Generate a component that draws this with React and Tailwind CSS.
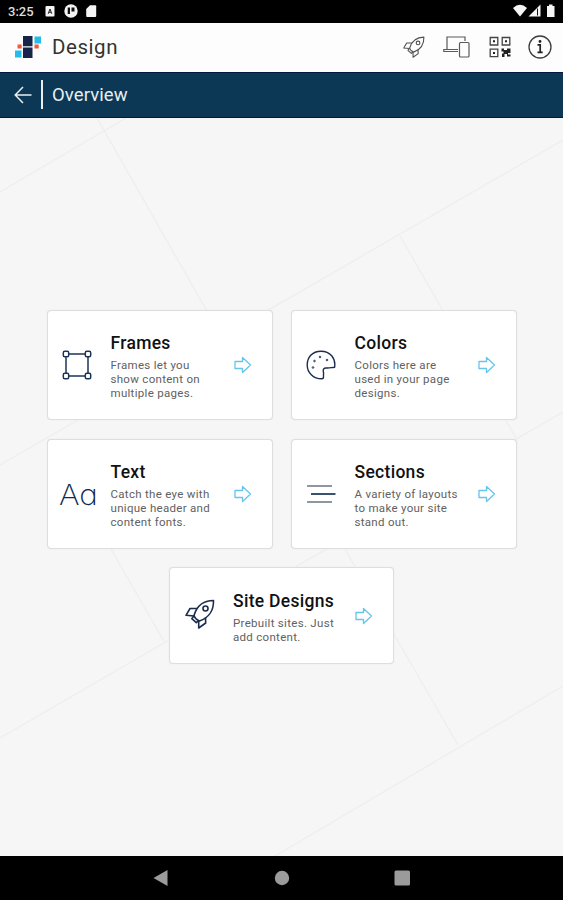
const FramesIcon = () => (
  <svg viewBox="0 0 30 30" className="h-[30px] w-[30px]" fill="none" stroke="#1c3557" strokeWidth="1.5">
    <path d="M7 4h16M7 26h16M4 7v16M26 7v16" />
    <rect x="1.3" y="1.3" width="5.4" height="5.4" rx="1.5" />
    <rect x="23.3" y="1.3" width="5.4" height="5.4" rx="1.5" />
    <rect x="1.3" y="23.3" width="5.4" height="5.4" rx="1.5" />
    <rect x="23.3" y="23.3" width="5.4" height="5.4" rx="1.5" />
  </svg>
);

const PaletteIcon = () => (
  <svg viewBox="0 0 30 30" className="h-[30px] w-[30px]" fill="none" stroke="#1c2d50" strokeWidth="1.4">
    <path d="M28.6 17.2C30 8 24 1.2 15 1.2S1.2 7.5 1.2 15c0 7.5 6 13.8 14.5 13.8q1.8 0 1.8-1.8c-.3-2 .5-3.500-.2-5.500-.4-2.500.8-3.800 3.200-3.500 2.800.3 5-.6 8.100-.8z" />
    <g strokeWidth="1">
      <circle cx="14" cy="7" r=".8" />
      <circle cx="21" cy="10" r=".8" />
      <circle cx="8.5" cy="11" r=".8" />
      <circle cx="7" cy="17.5" r=".8" />
    </g>
  </svg>
);

const SectionsIcon = () => (
  <svg viewBox="0 0 30 30" className="h-[30px] w-[30px]" fill="none" strokeWidth="1.7">
    <path d="M1 7h25M1 23h25" stroke="#6b7584" />
    <path d="M5 15h24.500" stroke="#163556" />
  </svg>
);

const RocketIcon = ({ className, stroke, strokeWidth }) => (
  <svg viewBox="0 0 30 30" className={className} fill="none" stroke={stroke} strokeWidth={strokeWidth} strokeLinejoin="round">
    <path d="M9 16.500C11.500 8 17 1.500 28.500 1.500c.3 10-5 17.500-14 20.500-2.500-1-4.700-3-5.500-5.500z" />
    <circle cx="20.500" cy="9.500" r="2.500" />
    <path d="M12 9.500H5L1 16.300l8 .7M20.500 18.500l.2 5.500-7 5v-7" />
    <path d="M8.800 17l-2 2.700 4.500 4 2-1.800" />
  </svg>
);

const ArrowIcon = () => (
  <svg viewBox="0 0 18 18" className="h-[18px] w-[18px] shrink-0" fill="none" stroke="#66c5ec" strokeWidth="1.3" strokeLinejoin="round">
    <path d="M1 5.500h7.500v-4l8 7.500-8 7.500v-4H1z" />
  </svg>
);

const cards = [
  { title: "Frames", lines: ["Frames let you", "show content on", "multiple pages."], icon: <FramesIcon /> },
  { title: "Colors", lines: ["Colors here are", "used in your page", "designs."], icon: <PaletteIcon /> },
  {
    title: "Text",
    lines: ["Catch the eye with", "unique header and", "content fonts."],
    icon: (
      <span className="ml-[2px] origin-center scale-x-112 pt-[2px] font-['Inter'] text-[28px] leading-[30px] font-extralight text-[#0d2a4f] [font-feature-settings:'cv11']">
        Aa
      </span>
    ),
  },
  { title: "Sections", lines: ["A variety of layouts", "to make your site", "stand out."], icon: <SectionsIcon /> },
];

const Card = ({ title, lines, icon, className }) => (
  <button
    className={`flex items-center rounded-[4px] border border-[#dedede] bg-white pr-5 text-left shadow-[0_0_1px_#dddddd] ${className}`}
  >
    <div className="flex w-[59px] shrink-0 justify-center">{icon}</div>
    <div className="ml-1 flex-1 pt-[2px]">
      <h2 className="text-[17.5px] leading-[22px] font-medium tracking-[0.3px] text-[#111111]">{title}</h2>
      <p className="mt-1 text-[11.5px] leading-[14px] tracking-[0.3px] whitespace-nowrap text-[#616161]">
        {lines.map((line) => (
          <span key={line} className="block">{line}</span>
        ))}
      </p>
    </div>
    <ArrowIcon />
  </button>
);

const StatusBar = () => (
  <div className="flex h-[22.5px] items-center bg-black px-2 text-white">
    <span className="w-[26px] pt-[2px] text-[13px] leading-4 font-medium text-[#dddddd]">3:25</span>
    <svg viewBox="0 0 54 14" className="ml-[10px] h-[14px] w-[54px]" fill="#f5f5f5">
      <rect x="1.500" y="2" width="9" height="10.500" rx="1" />
      <path d="M4.200 9.800L6 5l1.800 4.800M4.800 8.300h2.400" fill="none" stroke="#222222" />
      <circle cx="27" cy="7" r="6.700" />
      <path d="M23.700 3.500h2.300v6.500h-2.300zM27.500 3.500h3v4h-3z" fill="#111111" />
      <path d="M46 1.300h5.200q1 0 1 1v9.700q0 1-1 1h-8q-1 0-1-1V5z" />
    </svg>
    <svg viewBox="0 0 42 14" className="ml-auto h-[14px] w-[42px]" fill="#f5f5f5">
      <path d="M0 4q7-6.500 14 0L7 12.500z" />
      <path d="M15.500 12.500L27.500.5v12z" />
      <path d="M24.500 4.500v7" stroke="#111111" />
      <path d="M34 2h2V.5h3.500V2h2v11H34z" />
    </svg>
  </div>
);

const Header = () => (
  <header className="flex h-[49px] items-center bg-[#fdfdfd] pr-[11.5px] pl-[14px]">
    <svg viewBox="0 0 28 24" className="h-6 w-7">
      <path d="M9 1h9.500v10H9zM9 12.500h9.500v10.500H9z" fill="#17254a" />
      <path d="M20.500 1.500H27v7h-6.500zM1 15.500h6.500v7H1z" fill="#24bdea" />
      <path d="M3.500 9.500h4.200v4H3.500zM20.500 9.500h4.200v4h-4.200z" fill="#f05a3c" />
      <path d="M9 11.500h9.500" stroke="#b9c2cc" />
    </svg>
    <h1 className="ml-[10px] text-[20.5px] leading-6 tracking-[0.55px] text-[#333333]">Design</h1>
    <div className="ml-auto flex items-center">
      <RocketIcon className="h-[22px] w-[22px]" stroke="#505050" strokeWidth="1.5" />
      <svg viewBox="0 0 27 22" className="ml-[18px] h-[22px] w-[27px]" fill="none" stroke="#5a5a5a" strokeWidth="1.2">
        <path d="M4 13.500V1h18v4M4 13.500H.8v2H15M4 13.500h11" />
        <rect x="16.500" y="6.500" width="9.500" height="14.500" rx="1" />
      </svg>
      <svg viewBox="0 0 22 22" className="ml-[19px] h-[22px] w-[22px]" fill="none" stroke="#444444" strokeWidth="1.3">
        <path d="M1.200 1.500h7.600v7.500H1.200zM13.200 1.500h7.600v7.500h-7.600zM1.200 13.200h7.600v7.500H1.200z" />
        <path d="M4 4.200h2v2H4zM16 4.200h2v2h-2zM4 16h2v2H4zM12.500 12.500h2.500v1.500h3v-1.500h3.500V17H19v1.500h2.500v2H18V18h-2.500v3h-2.500v-3.500h1.500V15.500h-2z" fill="#222222" stroke="none" />
      </svg>
      <svg viewBox="0 0 24 24" className="ml-[17px] h-6 w-6" fill="none" stroke="#3d3d3d" strokeWidth="1.3">
        <circle cx="12" cy="12" r="11" />
        <path d="M9.500 9.800h2.700v7.200M9.500 17.300h5.200" stroke="#222222" strokeWidth="1.7" />
        <circle cx="12" cy="6.500" r="1.400" fill="#222222" stroke="none" />
      </svg>
    </div>
  </header>
);

const App = () => {
  return (
    <div className="flex h-[900px] w-full flex-col overflow-hidden bg-[#f6f6f6] font-['Roboto',sans-serif]">
      <StatusBar />
      <Header />

      {/* page title bar */}
      <nav className="flex h-[46.5px] items-center border-y border-y-[#04173f] bg-[#0c3856] pl-[14px] text-[#e8eef2]">
        <svg viewBox="0 0 18 18" className="h-[18px] w-[18px]" fill="none" stroke="currentColor" strokeWidth="1.5">
          <path d="M17.500 9H1.500M9 1L1.200 9 9 17" />
        </svg>
        <div className="ml-[9px] h-[29px] w-[1.5px] bg-[#e8eef2]" />
        <span className="ml-[9.5px] text-[18.5px] leading-6 tracking-[0.1px]">Overview</span>
      </nav>

      <main className="relative flex-1">
        {/* faint line pattern behind the cards */}
        <svg viewBox="0 118 563 738" className="absolute inset-0 h-full w-full" fill="none" stroke="#eeeeee" strokeWidth="1.3">
          <path d="M0 192L126 118M97 118L220 334M563 140L0 465M400 236L516 438M563 412L0 738M100 530L165 643M342 544L458 745M563 686L275 856" />
        </svg>
        <div className="relative flex flex-col items-center gap-[19px] pt-[192px]">
          <div className="grid grid-cols-2 gap-x-[18px] gap-y-[19px]">
            {cards.map((card) => (
              <Card key={card.title} {...card} className="h-[110px] w-[226px]" />
            ))}
          </div>
          <Card
            title="Site Designs"
            lines={["Prebuilt sites. Just", "add content."]}
            icon={<RocketIcon className="mb-[3px] h-[30px] w-[30px]" stroke="#1b2c4e" strokeWidth="1.6" />}
            className="-mt-px h-[97px] w-[225px]"
          />
        </div>
      </main>

      {/* android navigation buttons */}
      <div className="flex h-[44px] items-center justify-center bg-black">
        <svg viewBox="0 0 260 18" className="h-[18px] w-[260px]" fill="#9b9b9b">
          <path d="M15.500 1v16L1.500 9z" />
          <circle cx="130" cy="9" r="7.200" />
          <rect x="242.500" y="1.500" width="15.500" height="15" rx="1.500" />
        </svg>
      </div>
    </div>
  );
};

export default App;
